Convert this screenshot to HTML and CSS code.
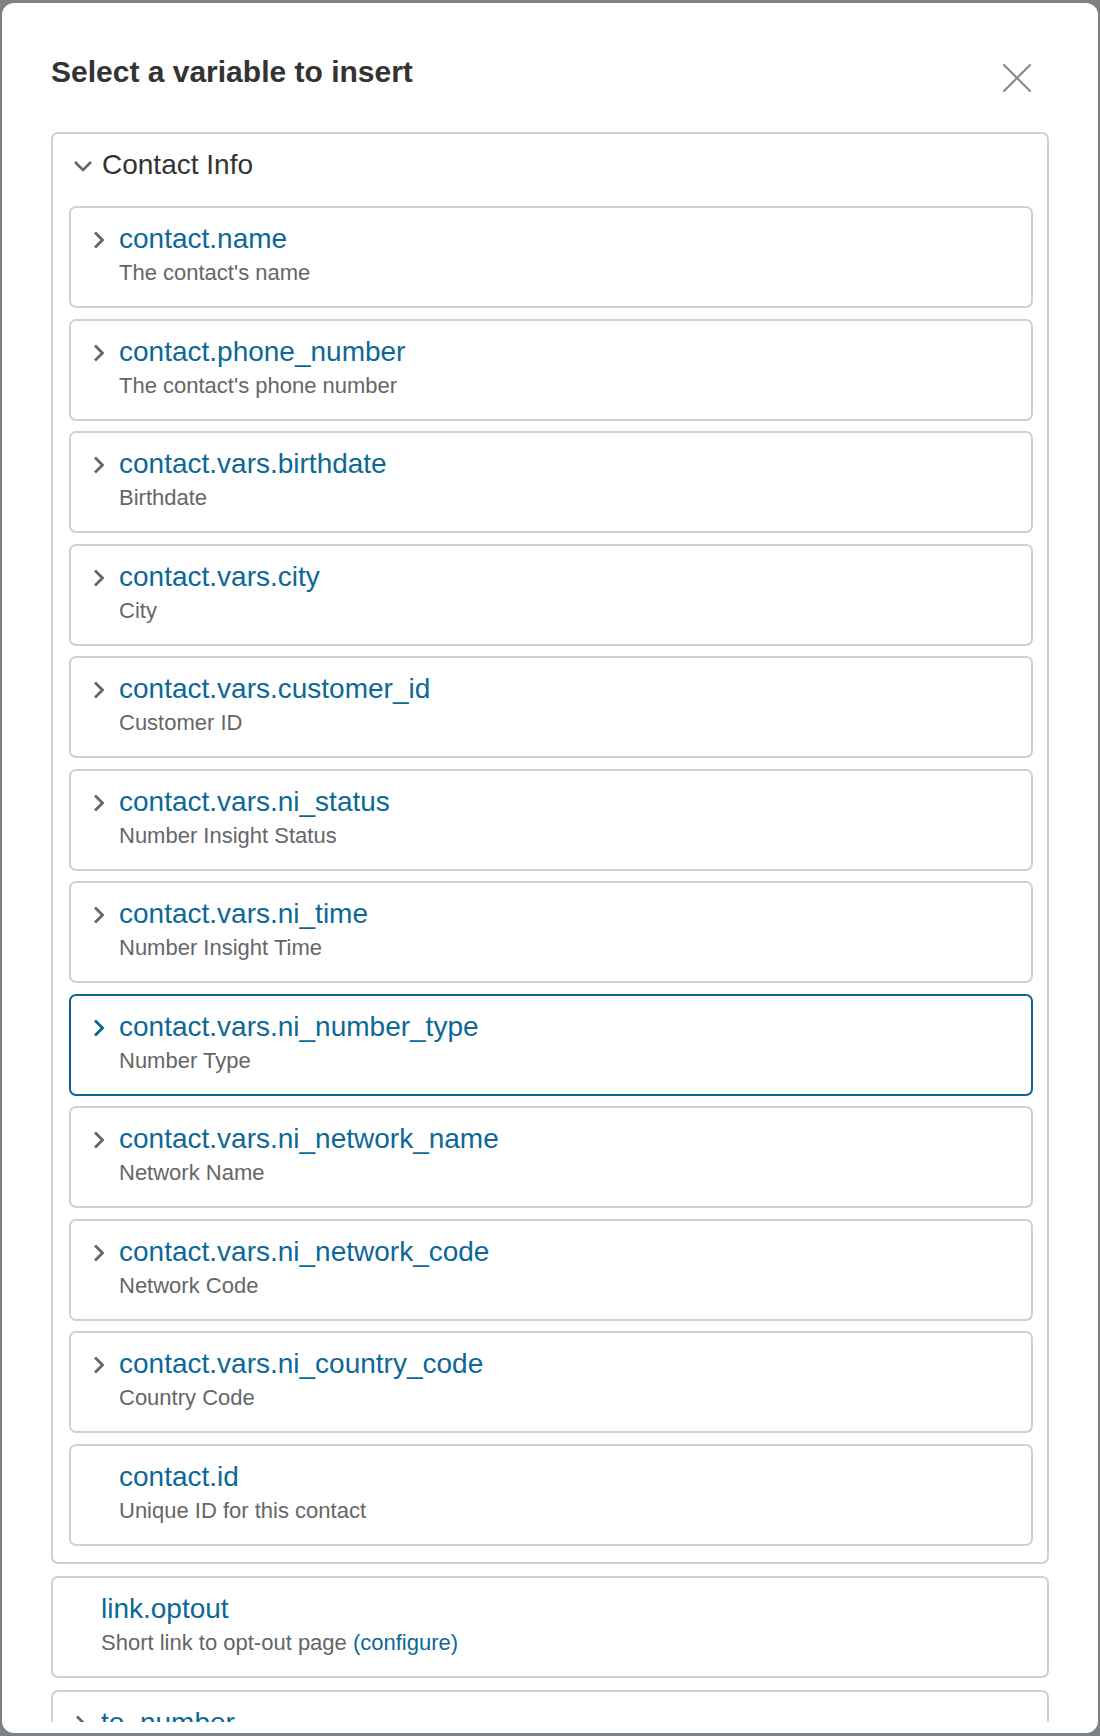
FILE: index.html
```html
<!DOCTYPE html>
<html lang="en">
    <head>
        <title>Insert Variable</title>
        <link rel="stylesheet" href="styles.css">
    </head>

    <body>
        <div class="modal">
            <div class="modalHeader">
                <h2 class="modalTitle">Select a variable to insert</h2>
                <button class="closeBtn" type="button" aria-label="Close">
                    <svg width="30" height="30" viewBox="0 0 30 30">
                        <path d="M2 2 L28 28 M28 2 L2 28" stroke="#8a8a8a" stroke-width="2.2" fill="none" stroke-linecap="round"/>
                    </svg>
                </button>
            </div>

            <div class="modalBody">
                <div class="group">
                    <div class="groupHead">
                        <svg class="caretDown" width="20" height="12" viewBox="0 0 20 12">
                            <path d="M2 2 L10 10 L18 2" stroke="#666" stroke-width="2.6" fill="none"/>
                        </svg>
                        <span>Contact Info</span>
                    </div>

                    <div class="varItem">
                        <svg class="caret" width="12" height="18" viewBox="0 0 12 18"><path d="M2 1.5 L9.5 9 L2 16.5" stroke="currentColor" stroke-width="2.8" fill="none"/></svg>
                        <div class="varName">contact.name</div>
                        <div class="varDesc">The contact's name</div>
                    </div>
                    <div class="varItem">
                        <svg class="caret" width="12" height="18" viewBox="0 0 12 18"><path d="M2 1.5 L9.5 9 L2 16.5" stroke="currentColor" stroke-width="2.8" fill="none"/></svg>
                        <div class="varName">contact.phone_number</div>
                        <div class="varDesc">The contact's phone number</div>
                    </div>
                    <div class="varItem">
                        <svg class="caret" width="12" height="18" viewBox="0 0 12 18"><path d="M2 1.5 L9.5 9 L2 16.5" stroke="currentColor" stroke-width="2.8" fill="none"/></svg>
                        <div class="varName">contact.vars.birthdate</div>
                        <div class="varDesc">Birthdate</div>
                    </div>
                    <div class="varItem">
                        <svg class="caret" width="12" height="18" viewBox="0 0 12 18"><path d="M2 1.5 L9.5 9 L2 16.5" stroke="currentColor" stroke-width="2.8" fill="none"/></svg>
                        <div class="varName">contact.vars.city</div>
                        <div class="varDesc">City</div>
                    </div>
                    <div class="varItem">
                        <svg class="caret" width="12" height="18" viewBox="0 0 12 18"><path d="M2 1.5 L9.5 9 L2 16.5" stroke="currentColor" stroke-width="2.8" fill="none"/></svg>
                        <div class="varName">contact.vars.customer_id</div>
                        <div class="varDesc">Customer ID</div>
                    </div>
                    <div class="varItem">
                        <svg class="caret" width="12" height="18" viewBox="0 0 12 18"><path d="M2 1.5 L9.5 9 L2 16.5" stroke="currentColor" stroke-width="2.8" fill="none"/></svg>
                        <div class="varName">contact.vars.ni_status</div>
                        <div class="varDesc">Number Insight Status</div>
                    </div>
                    <div class="varItem">
                        <svg class="caret" width="12" height="18" viewBox="0 0 12 18"><path d="M2 1.5 L9.5 9 L2 16.5" stroke="currentColor" stroke-width="2.8" fill="none"/></svg>
                        <div class="varName">contact.vars.ni_time</div>
                        <div class="varDesc">Number Insight Time</div>
                    </div>
                    <div class="varItem selected">
                        <svg class="caret" width="12" height="18" viewBox="0 0 12 18"><path d="M2 1.5 L9.5 9 L2 16.5" stroke="currentColor" stroke-width="2.8" fill="none"/></svg>
                        <div class="varName">contact.vars.ni_number_type</div>
                        <div class="varDesc">Number Type</div>
                    </div>
                    <div class="varItem">
                        <svg class="caret" width="12" height="18" viewBox="0 0 12 18"><path d="M2 1.5 L9.5 9 L2 16.5" stroke="currentColor" stroke-width="2.8" fill="none"/></svg>
                        <div class="varName">contact.vars.ni_network_name</div>
                        <div class="varDesc">Network Name</div>
                    </div>
                    <div class="varItem">
                        <svg class="caret" width="12" height="18" viewBox="0 0 12 18"><path d="M2 1.5 L9.5 9 L2 16.5" stroke="currentColor" stroke-width="2.8" fill="none"/></svg>
                        <div class="varName">contact.vars.ni_network_code</div>
                        <div class="varDesc">Network Code</div>
                    </div>
                    <div class="varItem">
                        <svg class="caret" width="12" height="18" viewBox="0 0 12 18"><path d="M2 1.5 L9.5 9 L2 16.5" stroke="currentColor" stroke-width="2.8" fill="none"/></svg>
                        <div class="varName">contact.vars.ni_country_code</div>
                        <div class="varDesc">Country Code</div>
                    </div>
                    <!-- no children, so no caret -->
                    <div class="varItem">
                        <div class="varName">contact.id</div>
                        <div class="varDesc">Unique ID for this contact</div>
                    </div>
                </div>

                <div class="varItem topLevel">
                    <div class="varName">link.optout</div>
                    <div class="varDesc">Short link to opt-out page <a href="#" class="configLink">(configure)</a></div>
                </div>

                <div class="varItem topLevel">
                    <svg class="caret" width="12" height="18" viewBox="0 0 12 18"><path d="M2 1.5 L9.5 9 L2 16.5" stroke="currentColor" stroke-width="2.8" fill="none"/></svg>
                    <div class="varName">to_number</div>
                    <div class="varDesc">The number the message was sent to</div>
                </div>
            </div>
        </div>
    </body>
</html>
```

FILE: styles.css
```css
body {
    margin: 0;
    background-color: #7d8183;
    font-family: "Liberation Sans", Arial, sans-serif;
}

.modal {
    margin: 3px 2px;
    height: 1730px;
    background-color: white;
    border-radius: 12px;
    padding: 0 49px 11px 49px;
    box-sizing: border-box;
    display: flex;
    flex-direction: column;
}

.modalHeader {
    display: flex;
    justify-content: space-between;
    align-items: flex-start;
    padding-top: 51px;
    margin-bottom: 39px;
}

.modalTitle {
    margin: 0;
    font-size: 30px;
    line-height: 36px;
    font-weight: bold;
    color: #333;
}

.closeBtn {
    border: none;
    background: none;
    padding: 0;
    margin: 9px 17px 0 0;
    cursor: pointer;
    line-height: 0;
}

.modalBody {
    flex: 1;
    overflow: hidden;
}

.group {
    border: 2px solid #d0d0d0;
    border-radius: 7px;
    padding: 0 14px 16px 16px;
    margin-bottom: 12px;
}

.groupHead {
    display: flex;
    align-items: center;
    gap: 9px;
    padding: 15px 0 25px 4px;
    font-size: 28px;
    line-height: 32px;
    color: #333;
}

.caretDown {
    margin-top: 2px;
}

.varItem {
    display: grid;
    grid-template-columns: 26px 1fr;
    border: 2px solid #d0d0d0;
    border-radius: 7px;
    padding: 14px 16px 18px 22px;
    margin-bottom: 10.5px;
    color: #666;
}

.group .varItem:last-child {
    margin-bottom: 0;
}

.topLevel {
    margin-bottom: 12px;
}

.caret {
    grid-column: 1;
    grid-row: 1;
    margin-top: 9px;
}

.varName {
    grid-column: 2;
    grid-row: 1;
    font-size: 28px;
    line-height: 34px;
    color: #0c6897;
}

.varDesc {
    grid-column: 2;
    grid-row: 2;
    margin-top: 2px;
    font-size: 22px;
    line-height: 30px;
    color: #666;
}

.selected {
    border-color: #0c6497;
    color: #0c6497;
}

.configLink {
    color: #0c6897;
    text-decoration: none;
}
```
